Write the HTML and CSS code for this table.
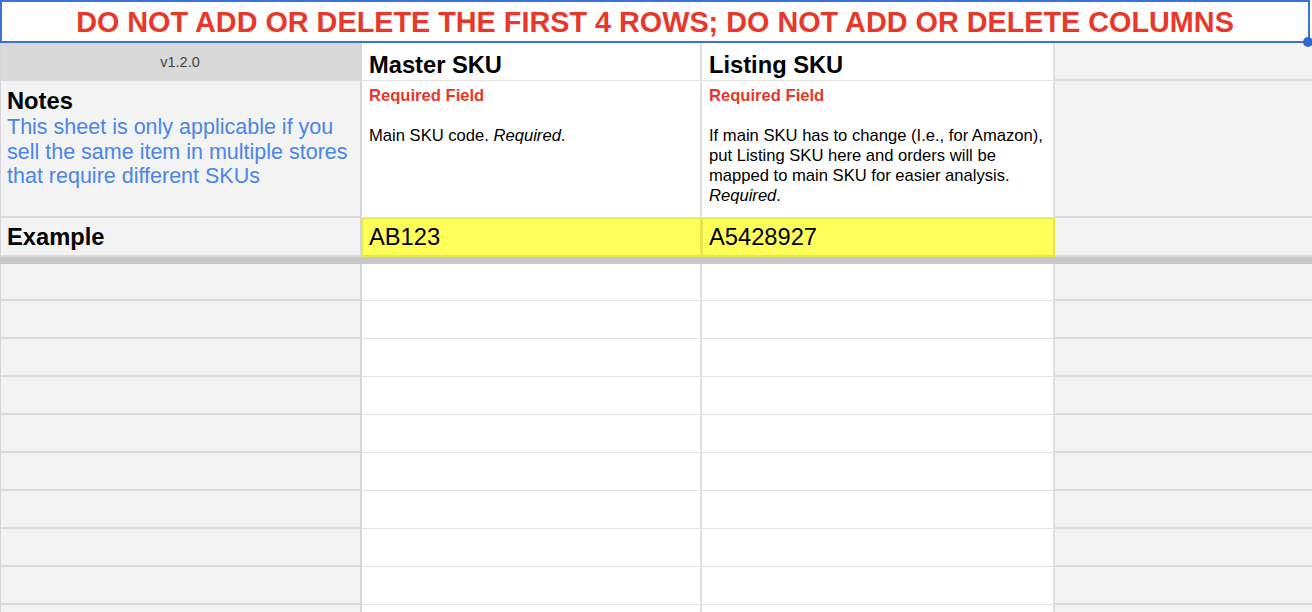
FILE: index.html
```html
<!DOCTYPE html>
<html lang="en">
<head>
<meta charset="utf-8">
<title>SKU Mapping</title>
<link rel="stylesheet" href="styles.css">
</head>
<body>
<div class="page">
  <div class="banner">
    <span class="banner-text">DO NOT ADD OR DELETE THE FIRST 4 ROWS; DO NOT ADD OR DELETE COLUMNS</span>
    <span class="handle"></span>
  </div>
  <div class="sheet">
    <div class="cell side version">v1.2.0</div>
    <div class="cell head"><span>Master SKU</span></div>
    <div class="cell head"><span>Listing SKU</span></div>
    <div class="cell side right"></div>

    <div class="cell side notes">
      <div class="notes-title">Notes</div>
      <div class="notes-body">This sheet is only applicable if you<br>sell the same item in multiple stores<br>that require different SKUs</div>
    </div>
    <div class="cell desc">
      <div class="req">Required Field</div>
      <div class="blank"></div>
      <div>Main SKU code. <em>Required</em>.</div>
    </div>
    <div class="cell desc">
      <div class="req">Required Field</div>
      <div class="blank"></div>
      <div>If main SKU has to change (I.e., for Amazon),<br>put Listing SKU here and orders will be<br>mapped to main SKU for easier analysis.<br><em>Required</em>.</div>
    </div>
    <div class="cell side right"></div>

    <div class="cell side example"><span>Example</span></div>
    <div class="cell yellow"><span>AB123</span></div>
    <div class="cell yellow"><span>A5428927</span></div>
    <div class="cell side right"></div>

    <div class="freeze"></div>

    <div class="cell side"></div><div class="cell"></div><div class="cell"></div><div class="cell side right"></div>
    <div class="cell side"></div><div class="cell"></div><div class="cell"></div><div class="cell side right"></div>
    <div class="cell side"></div><div class="cell"></div><div class="cell"></div><div class="cell side right"></div>
    <div class="cell side"></div><div class="cell"></div><div class="cell"></div><div class="cell side right"></div>
    <div class="cell side"></div><div class="cell"></div><div class="cell"></div><div class="cell side right"></div>
    <div class="cell side"></div><div class="cell"></div><div class="cell"></div><div class="cell side right"></div>
    <div class="cell side"></div><div class="cell"></div><div class="cell"></div><div class="cell side right"></div>
    <div class="cell side"></div><div class="cell"></div><div class="cell"></div><div class="cell side right"></div>
    <div class="cell side"></div><div class="cell"></div><div class="cell"></div><div class="cell side right"></div>
    <div class="cell side"></div><div class="cell"></div><div class="cell"></div><div class="cell side right"></div>
  </div>
</div>
</body>
</html>
```

FILE: styles.css
```css
* { box-sizing: border-box; }
html, body {
  margin: 0;
  padding: 0;
  background: #ffffff;
  overflow: hidden;
}
body {
  font-family: "Liberation Sans", Arial, sans-serif;
  color: #000;
}
.page {
  width: 1312px;
  height: 612px;
  overflow: hidden;
}
.banner {
  position: relative;
  z-index: 2;
  width: 1310px;
  height: 43px;
  border: 2px solid #3a74d8;
  display: flex;
  align-items: center;
  justify-content: center;
  background: #fff;
}
.banner-text {
  font-size: 28.8px;
  font-weight: bold;
  color: #e8382b;
  line-height: 1;
  padding-top: 1px;
}
.handle {
  position: absolute;
  right: -5px;
  bottom: -6px;
  width: 10px;
  height: 10px;
  border-radius: 50%;
  background: #2f66cf;
}
.sheet {
  display: grid;
  grid-template-columns: 362px 340px 353px 257px;
  grid-template-rows: 38px 137px 39px 7px 37px repeat(9, 38px);
}
.cell {
  background: #fff;
  border-right: 2px solid #e0e0e0;
  border-bottom: 1px solid #e2e2e2;
  padding: 0 7px;
  display: flex;
  align-items: flex-end;
  overflow: hidden;
}
.cell.side {
  background: #f3f3f3;
  border-left: 1px solid #d6d6d6;
  border-right: 2px solid #d6d6d6;
  border-bottom: 2px solid #d9d9d9;
  padding-left: 6px;
}
.cell.side.right {
  border-left: 0;
  border-right: 0;
}
.version {
  background: #d9d9d9 !important;
  justify-content: center;
  align-items: center;
  font-size: 14.5px;
  color: #444;
  padding-top: 1px;
}
.head {
  font-size: 23.7px;
  font-weight: bold;
  line-height: 28px;
  padding-bottom: 1px;
}
.notes {
  flex-direction: column;
  align-items: flex-start;
  justify-content: flex-start;
  padding-top: 7px;
}
.notes-title {
  font-size: 23.7px;
  font-weight: bold;
  line-height: 27px;
}
.notes-body {
  font-size: 21.5px;
  line-height: 24.6px;
  color: #4a86e8;
  white-space: nowrap;
}
.desc {
  flex-direction: column;
  align-items: flex-start;
  justify-content: flex-start;
  padding-top: 5px;
  font-size: 16.6px;
  line-height: 20px;
  white-space: nowrap;
}
.desc em { font-style: italic; }
.req {
  color: #e8382b;
  font-weight: bold;
}
.blank { height: 20px; }
.example, .yellow {
  font-size: 23.7px;
  line-height: 28px;
  padding-bottom: 4px;
}
.example { font-weight: bold; }
.yellow {
  background: #ffff5a;
  border-right: 2px solid #e6e64c;
  border-bottom: 2px solid #e6e64c;
  box-shadow: inset 1px 1px 0 #e6e64c;
}
.freeze {
  grid-column: 1 / -1;
  background: #c8c8c8;
}
```
